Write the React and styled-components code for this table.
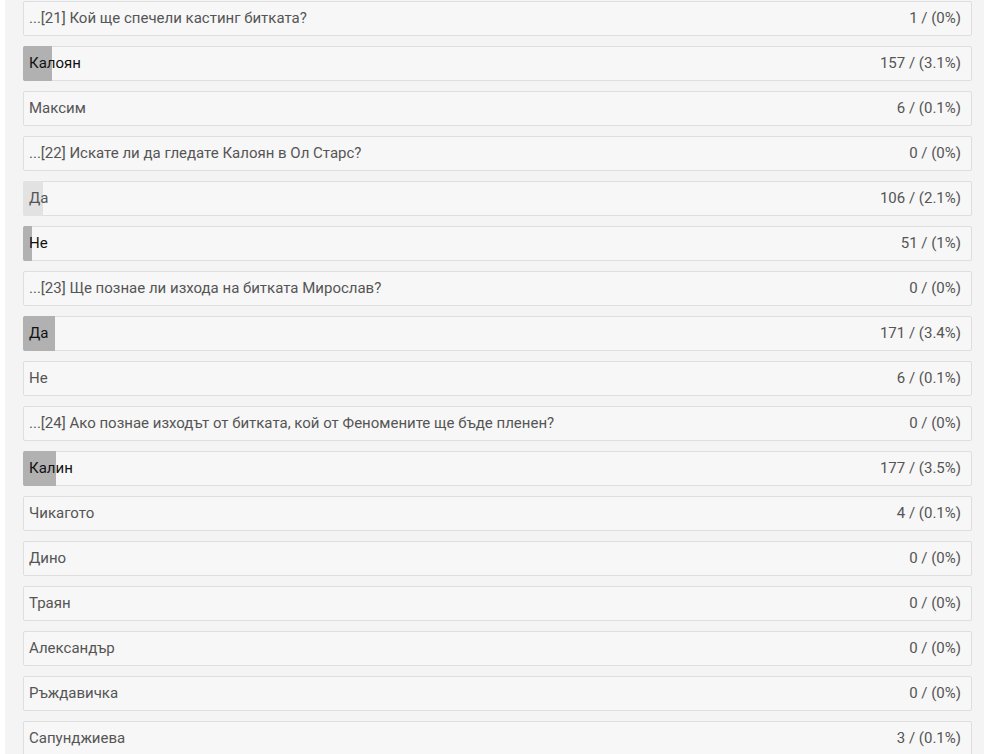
import React from "react";
import styled, { createGlobalStyle } from "styled-components";

const GlobalStyle = createGlobalStyle`
  html, body {
    margin: 0;
    padding: 0;
    background: #fff;
  }
  body {
    font-family: Roboto, "Liberation Sans", Arial, sans-serif;
  }
`;

const Page = styled.div`
  margin: 0 5px;
  padding: 1px 12px 0 18px;
  height: 754px;
  overflow: hidden;
  background: #f4f4f4;
`;

const List = styled.div`
  display: flex;
  flex-direction: column;
  gap: 10px;
`;

const Row = styled.div`
  position: relative;
  display: flex;
  justify-content: space-between;
  align-items: center;
  height: 33px;
  padding: 0 10px 0 5px;
  border: 1px solid #dedede;
  border-radius: 2px;
  background: #f7f7f7;
  font-size: 15px;
  color: #555;
`;

const Bar = styled.div`
  position: absolute;
  left: -1px;
  top: -1px;
  bottom: -1px;
  border-radius: 2px 0 0 2px;
  background: ${(p) => (p.$light ? "#e2e2e2" : "#b1b1b1")};
`;

const Label = styled.span`
  position: relative;
  margin-top: -1px;
  color: ${(p) => (p.$lead ? "#111" : "inherit")};
`;

const Count = styled.span`
  position: relative;
  margin-top: -1px;
`;

const rows = [
  { text: "...[21] Кой ще спечели кастинг битката?", n: 1, pct: "0" },
  { text: "Калоян", n: 157, pct: "3.1", bar: 3.1, lead: true },
  { text: "Максим", n: 6, pct: "0.1" },
  { text: "...[22] Искате ли да гледате Калоян в Ол Старс?", n: 0, pct: "0" },
  { text: "Да", n: 106, pct: "2.1", bar: 2.1, light: true },
  { text: "Не", n: 51, pct: "1", bar: 1, lead: true },
  { text: "...[23] Ще познае ли изхода на битката Мирослав?", n: 0, pct: "0" },
  { text: "Да", n: 171, pct: "3.4", bar: 3.4, lead: true },
  { text: "Не", n: 6, pct: "0.1" },
  { text: "...[24] Ако познае изходът от битката, кой от Феномените ще бъде пленен?", n: 0, pct: "0" },
  { text: "Калин", n: 177, pct: "3.5", bar: 3.5, lead: true },
  { text: "Чикагото", n: 4, pct: "0.1" },
  { text: "Дино", n: 0, pct: "0" },
  { text: "Траян", n: 0, pct: "0" },
  { text: "Александър", n: 0, pct: "0" },
  { text: "Ръждавичка", n: 0, pct: "0" },
  { text: "Сапунджиева", n: 3, pct: "0.1" },
];

export default function App() {
  return (
    <>
      <GlobalStyle />
      <Page>
        <List>
          {rows.map((r, i) => (
            <Row key={i}>
              {r.bar ? <Bar $light={r.light} style={{ width: `${r.bar}%` }} /> : null}
              <Label $lead={r.lead}>{r.text}</Label>
              <Count>
                {r.n} / ({r.pct}%)
              </Count>
            </Row>
          ))}
        </List>
      </Page>
    </>
  );
}
